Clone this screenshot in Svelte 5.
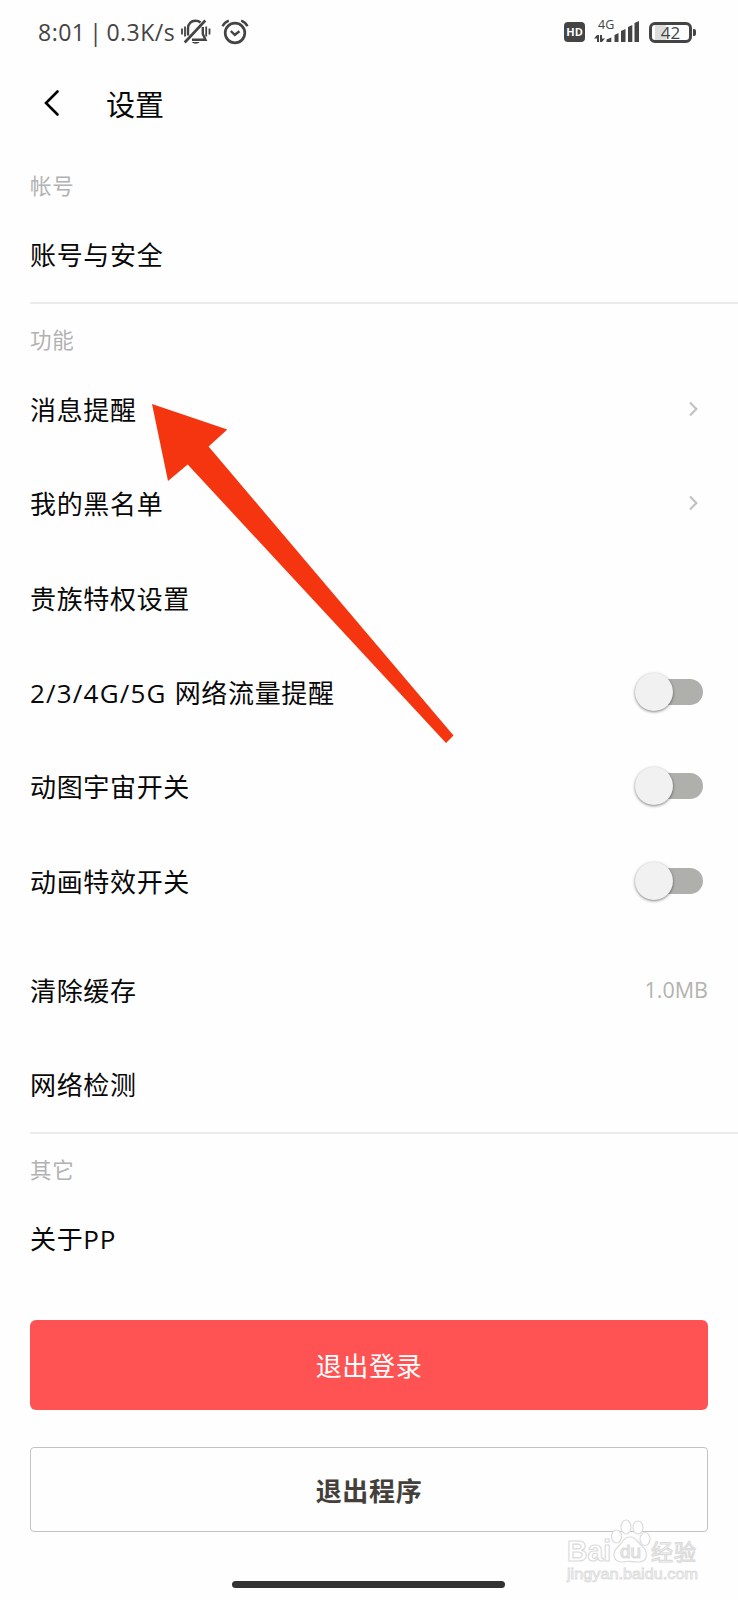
<script lang="ts">
	interface Item {
		label: string;
		prefix?: string;
		kind?: 'link' | 'switch' | 'value';
		value?: string;
		spaced?: boolean;
	}

	interface Section {
		title: string;
		items: Item[];
	}

	const sections: Section[] = [
		{ title: '帐号', items: [{ label: '账号与安全' }] },
		{
			title: '功能',
			items: [
				{ label: '消息提醒', kind: 'link' },
				{ label: '我的黑名单', kind: 'link' },
				{ label: '贵族特权设置' },
				{ prefix: '2/3/4G/5G ', label: '网络流量提醒', kind: 'switch' },
				{ label: '动图宇宙开关', kind: 'switch' },
				{ label: '动画特效开关', kind: 'switch' },
				{ label: '清除缓存', kind: 'value', value: '1.0MB', spaced: true },
				{ label: '网络检测' },
			],
		},
		{ title: '其它', items: [{ label: '关于PP' }] },
	];

	let enabled = $state<Record<string, boolean>>({});
</script>

<div class="screen">
	<div class="status">
		<span class="clock">8:01 | 0.3K/s</span>
		<svg class="bell" width="32" height="28" viewBox="0 0 32 28" fill="none" stroke="#444" stroke-width="2.4">
			<path d="M8 17.5V10.5C8 5.5 11 2.8 15.5 2.8C17.5 2.8 19.2 3.3 20.5 4.5M22.8 9V16L25.5 21.7H12" />
			<path d="M25.3 2.5L4.7 24.5" stroke-width="2.6" />
			<path d="M2 10.5V16.5M5 8.5V18.5M26.2 8.5V18.5M29.5 10.5V16.5" stroke-width="1.8" />
			<path d="M12 24H19.5C18.5 26.3 13 26.3 12 24Z" fill="#444" stroke="none" />
		</svg>
		<svg class="alarm" width="28" height="28" viewBox="0 0 28 28" fill="none" stroke="#444" stroke-width="2.7">
			<circle cx="14" cy="15" r="9.8" />
			<path d="M9.8 13L13.8 16.8L18.5 13.2" stroke-width="2.4" />
			<path d="M1.5 8.2C2.8 5.8 5 3.7 7.8 2.7M20.2 2.7C23 3.7 25.2 5.8 26.5 8.2" stroke-width="2.4" />
		</svg>
		<span class="hd">HD</span>
		<div class="signal">
			<span class="net">4G</span>
			<svg width="46" height="24" viewBox="0 0 46 24" fill="#444">
				<path d="M0 18.5L3 15H5V22H3V18.5ZM6 15H8V18.5H11L8 22H6Z" />
				<path d="M12.5 22V19.5L17.3 17.5V22ZM20.5 22V15L24.5 13V22ZM27 22V11L31.5 9V22ZM34 22V7L38.3 5V22ZM40.5 22V3L45 1V22Z" />
			</svg>
		</div>
		<div class="battery"><span>42</span></div>
	</div>

	<header>
		<svg width="18" height="30" viewBox="0 0 18 30" fill="none" stroke="#000" stroke-width="2.6" stroke-linecap="round">
			<path d="M14.5 3.5L3 15L14.5 26.5" />
		</svg>
		<h1>设置</h1>
	</header>

	{#each sections as section}
		<section>
			<h2>{section.title}</h2>
			{#each section.items as item}
				<div class="row" class:spaced={item.spaced}>
					<span class="label">{#if item.prefix}<span class="prefix">{item.prefix}</span>{/if}{item.label}</span>
					{#if item.kind === 'link'}
						<svg class="chevron" width="12" height="18" viewBox="0 0 12 18" fill="none" stroke="#c2c2c2" stroke-width="2.2">
							<path d="M2 2.5L8.3 9L2 15.5" />
						</svg>
					{:else if item.kind === 'switch'}
						<button
							class="switch"
							class:on={enabled[item.label]}
							aria-label={item.label}
							onclick={() => (enabled[item.label] = !enabled[item.label])}
						><span class="thumb"></span></button>
					{:else if item.kind === 'value'}
						<span class="value">{item.value}</span>
					{/if}
				</div>
			{/each}
		</section>
	{/each}

	<div class="actions">
		<button class="logout">退出登录</button>
		<button class="quit">退出程序</button>
	</div>
	<div class="home"></div>

	<!-- pointer over the list -->
	<svg class="arrow" width="306" height="344" viewBox="0 0 306 344">
		<path d="M2 2L77.3 27.5L58.6 44.5L303.5 333.5L296 341L37.7 62.5L18 79Z" fill="#f5350f" />
	</svg>

	<svg class="watermark" width="140" height="68" viewBox="0 0 140 68" fill="#fff" stroke="#dcdcdc" stroke-width="1.2">
		<text x="2" y="42.5" font-size="29" font-weight="700" textLength="44" lengthAdjust="spacingAndGlyphs">Bai</text>
		<ellipse cx="51.5" cy="18.5" rx="5" ry="6.5" />
		<ellipse cx="61" cy="9" rx="5" ry="7" />
		<ellipse cx="73" cy="9.5" rx="5" ry="6.5" />
		<ellipse cx="80" cy="21" rx="5" ry="6.5" />
		<path d="M65 19C71 19 72 24 77 28C83 33 84 44 73 44C68 44 65 43 61 43.5C55 45 49 43 49 37C49 30 54 29 57 24C59 21 61 19 65 19Z" />
		<text x="55" y="40" font-size="18" textLength="21" lengthAdjust="spacingAndGlyphs">du</text>
		<text x="86" y="41.5" font-size="22" textLength="45">经验</text>
		<text x="2" y="60.5" font-size="14" textLength="131" lengthAdjust="spacingAndGlyphs" stroke-width="0.8">jingyan.baidu.com</text>
	</svg>
</div>

<style>
	:global(body) { margin: 0; background: #fefefe; }
	.screen { position: relative; width: 738px; height: 1600px; overflow: hidden; background: #fefefe; color: #080808; font-family: "Open Sans", "Noto Sans CJK SC", sans-serif; display: flex; flex-direction: column; }
	button { font: inherit; padding: 0; border: none; cursor: pointer; box-sizing: border-box; }

	.status { flex: 0 0 64px; display: flex; align-items: center; padding: 0 46px 0 38px; box-sizing: border-box; color: #444; }
	.clock { width: 142px; font-size: 23px; font-weight: 500; letter-spacing: .5px; word-spacing: -2.6px; white-space: nowrap; line-height: 30px; }
	.alarm { margin-left: 9px; }
	.hd { margin-left: auto; width: 21px; height: 20px; border-radius: 4px; background: #444; color: #fff; font-size: 11px; font-weight: 700; line-height: 20px; text-align: center; }
	.signal { position: relative; margin-left: 9px; width: 46px; height: 24px; }
	.net { position: absolute; left: 4px; top: -1px; font-size: 12.5px; font-weight: 500; line-height: 12px; }
	.battery { position: relative; margin-left: 9px; width: 43px; height: 21px; box-sizing: border-box; border: 3px solid #444; border-radius: 6px; background: linear-gradient(90deg, transparent 3px, #ddd 3px, #ddd 14px, transparent 14px); font-size: 17px; font-weight: 500; line-height: 15px; text-align: center; }
	.battery::after { content: ""; position: absolute; right: -7px; top: 4px; width: 3px; height: 7px; border-radius: 0 2px 2px 0; background: #444; }

	header { flex: 0 0 84px; display: flex; align-items: center; padding-left: 43px; }
	header svg { margin-top: -6px; }
	h1 { margin: -2px 0 0 45px; font-size: 29px; font-weight: 400; line-height: 40px; }

	section { margin-left: 30px; padding-top: 12.5px; border-bottom: 2px solid #ebebeb; }
	section:first-of-type { padding-top: 14.6px; }
	section:last-of-type { border-bottom: none; }
	h2 { margin: 0; height: 46px; line-height: 46px; font-size: 21.5px; font-weight: 400; letter-spacing: .8px; color: #b2b2b2; }
	.row { display: flex; align-items: center; justify-content: space-between; height: 94.4px; padding-right: 30px; }
	.row:last-child { height: 93.6px; }
	.row.spaced { margin-top: 15px; }
	.label { font-size: 26px; letter-spacing: .67px; line-height: 36px; white-space: nowrap; }
	.prefix { letter-spacing: 1.2px; }
	.chevron { margin: -2px 8px 0 0; }
	.value { margin-top: -3px; font-size: 21.5px; color: #b3b3af; }

	.switch { display: flex; align-items: center; width: 62px; height: 26px; margin: -2px 5px 0 0; border-radius: 13px; background: #afafab; }
	.thumb { flex: 0 0 38px; height: 38px; margin-left: -6px; border-radius: 50%; background: #f1f1f1; box-shadow: 0 1px 3px rgba(0, 0, 0, .5); }
	.switch.on .thumb { margin-left: 30px; }

	.actions { display: flex; flex-direction: column; gap: 37px; margin: 34px 30px 0; font-size: 26px; letter-spacing: .67px; }
	.logout { height: 90px; border-radius: 6px; background: #ff5353; color: #fff; letter-spacing: inherit; }
	.quit { height: 85px; border: 1px solid #c4c4be; border-radius: 4px; background: #fefefe; color: #443f3b; font-weight: 700; letter-spacing: inherit; }
	.home { width: 273px; height: 7px; margin: 49px 0 0 232px; border-radius: 4px; background: #333; }

	.arrow { position: absolute; left: 150px; top: 402px; pointer-events: none; }
	.watermark { position: absolute; left: 565px; top: 1518px; font-family: "Liberation Sans", "Noto Sans CJK SC", sans-serif; pointer-events: none; }
</style>
